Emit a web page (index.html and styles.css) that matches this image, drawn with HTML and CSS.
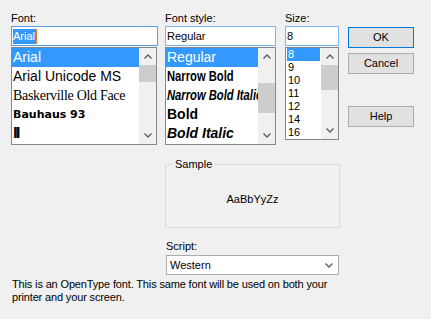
FILE: index.html
```html
<!DOCTYPE html>
<html lang="en">
<head>
  <meta charset="UTF-8" />
  <title>Font</title>
  <link rel="stylesheet" href="styles.css">
</head>
<body>
  <div class="dialog">
    <div class="top">

      <div class="col col-font">
        <div class="label">Font:</div>
        <div class="input focus"><span class="picked">Arial</span><span class="caret"></span></div>
        <div class="listbox list-font">
          <ul class="items">
            <li class="on">Arial</li>
            <li>Arial Unicode MS</li>
            <li class="f-bask">Baskerville Old Face</li>
            <li class="f-bauhaus">Bauhaus 93</li>
            <li class="f-bars">ll</li>
          </ul>
          <div class="sb">
            <div class="sb-btn"><svg width="8" height="5" viewBox="0 0 8 5"><polyline points="0.5,4.5 4,1 7.5,4.5" /></svg></div>
            <div class="sb-track"><div class="sb-thumb thumb-font"></div></div>
            <div class="sb-btn"><svg width="8" height="5" viewBox="0 0 8 5"><polyline points="0.5,0.5 4,4 7.5,0.5" /></svg></div>
          </div>
        </div>
      </div>

      <div class="col col-style">
        <div class="label">Font style:</div>
        <div class="input">Regular</div>
        <div class="listbox list-style">
          <ul class="items">
            <li class="on">Regular</li>
            <li class="s-narrow"><span>Narrow Bold</span></li>
            <li class="s-narrow s-italic"><span>Narrow Bold Italic</span></li>
            <li class="s-bold">Bold</li>
            <li class="s-bold s-italic">Bold Italic</li>
          </ul>
          <div class="sb">
            <div class="sb-btn"><svg width="8" height="5" viewBox="0 0 8 5"><polyline points="0.5,4.5 4,1 7.5,4.5" /></svg></div>
            <div class="sb-track"><div class="sb-thumb thumb-style"></div></div>
            <div class="sb-btn"><svg width="8" height="5" viewBox="0 0 8 5"><polyline points="0.5,0.5 4,4 7.5,0.5" /></svg></div>
          </div>
        </div>
      </div>

      <div class="col col-size">
        <div class="label">Size:</div>
        <div class="input">8</div>
        <div class="listbox list-size">
          <ul class="items">
            <li class="on">8</li>
            <li>9</li>
            <li>10</li>
            <li>11</li>
            <li>12</li>
            <li>14</li>
            <li>16</li>
          </ul>
          <div class="sb">
            <div class="sb-btn"><svg width="8" height="5" viewBox="0 0 8 5"><polyline points="0.5,4.5 4,1 7.5,4.5" /></svg></div>
            <div class="sb-track"><div class="sb-thumb thumb-size"></div></div>
            <div class="sb-btn"><svg width="8" height="5" viewBox="0 0 8 5"><polyline points="0.5,0.5 4,4 7.5,0.5" /></svg></div>
          </div>
        </div>
      </div>

      <div class="buttons">
        <div class="button default">OK</div>
        <div class="button">Cancel</div>
        <div class="button help">Help</div>
      </div>
    </div>

    <div class="lower">
      <fieldset class="sample">
        <legend>Sample</legend>
        <div class="sample-text">AaBbYyZz</div>
      </fieldset>
      <div class="label script-label">Script:</div>
      <div class="combo">
        <span>Western</span>
        <svg width="8" height="5" viewBox="0 0 8 5"><polyline points="0.5,0.5 4,4 7.5,0.5" /></svg>
      </div>
    </div>

    <p class="note">This is an OpenType font. This same font will be used on both your<br>printer and your screen.</p>
  </div>
</body>
</html>
```

FILE: styles.css
```css
body {
  margin: 0;
  background-color: #f0f0f0;
  color: #000;
  font-family: "Liberation Sans", Arial, sans-serif;
  font-size: 11px;
  width: 431px;
  height: 319px;
  overflow: hidden;
}

.dialog {
  padding: 10px 0 0 11px;
}

.top {
  display: flex;
  align-items: flex-start;
}

.col {
  display: flex;
  flex-direction: column;
}

.col-font {
  width: 147px;
  margin-right: 7px;
}

.col-style {
  width: 111px;
  margin-right: 9px;
}

.col-size {
  width: 54px;
  margin-right: 9px;
}

.label {
  line-height: 16px;
  height: 16px;
}

/* text boxes */
.input {
  height: 20px;
  box-sizing: border-box;
  border: 1px solid #7eb4ea;
  background: #fff;
  padding-left: 1px;
  display: flex;
  align-items: center;
  line-height: 15px;
}

.input.focus {
  border-color: #569de5;
}

.picked {
  background: #3399ff;
  color: #fff;
  padding: 0 1px 0 0;
}

.caret {
  width: 1px;
  height: 15px;
  background: #e07a1f;
}

/* list boxes */
.listbox {
  margin-top: 1px;
  box-sizing: border-box;
  border: 1px solid #828790;
  background: #fff;
  display: flex;
  overflow: hidden;
}

.list-font {
  width: 146px;
  height: 98px;
}

.list-style {
  height: 98px;
}

.list-size {
  height: 93px;
}

.items {
  list-style: none;
  margin: 0;
  padding: 0;
  flex: 1;
  min-width: 0;
  overflow: hidden;
}

.items li {
  white-space: nowrap;
  overflow: hidden;
  height: 19px;
  line-height: 19px;
  padding-left: 1px;
  font-size: 14px;
}

.items li.on {
  background: #3399ff;
  color: #fff;
}

.list-size .items {
  padding: 0 1px;
}

.list-size .items li {
  height: 13px;
  line-height: 13px;
  font-size: 11px;
  padding-left: 1px;
}

.f-bask {
  font-family: "Liberation Serif", serif;
  font-size: 14px !important;
  letter-spacing: -0.3px;
}

.f-bauhaus {
  font-family: "DejaVu Sans", sans-serif;
  font-weight: 900;
  font-size: 11px !important;
}

.f-bars {
  font-family: "DejaVu Sans", sans-serif;
  font-weight: 900;
  letter-spacing: -2px;
}

.s-narrow {
  font-weight: bold;
}

.s-narrow span {
  display: inline-block;
  transform: scaleX(0.8);
  transform-origin: left center;
}

.s-bold {
  font-weight: bold;
}

.s-italic {
  font-style: italic;
}

/* scroll bars */
.sb {
  width: 17px;
  flex: none;
  background: #f0f0f0;
  display: flex;
  flex-direction: column;
}

.sb-btn {
  height: 17px;
  flex: none;
  display: flex;
  align-items: center;
  justify-content: center;
}

.sb-btn svg polyline,
.combo svg polyline {
  fill: none;
  stroke: #606060;
  stroke-width: 1.4;
}

.sb-track {
  flex: 1;
}

.sb-thumb {
  background: #cdcdcd;
}

.thumb-font {
  height: 17px;
}

.thumb-style {
  margin-top: 18px;
  height: 30px;
}

.thumb-size {
  height: 25px;
}

/* buttons */
.buttons {
  width: 66px;
  margin-top: 17px;
  display: flex;
  flex-direction: column;
  gap: 5px;
}

.button {
  height: 21px;
  box-sizing: border-box;
  border: 1px solid #adadad;
  background: #e1e1e1;
  text-align: center;
  line-height: 19px;
}

.button.default {
  border-color: #0078d7;
}

.button.help {
  margin-top: 27px;
}

/* sample + script */
.lower {
  margin-left: 154px;
  width: 175px;
}

.sample {
  margin: 13px 0 0 0;
  padding: 0;
  border: 1px solid #dcdcdc;
  min-width: 0;
}

.sample legend {
  margin-left: 7px;
  padding: 0 2px;
  line-height: 13px;
}

.sample-text {
  height: 56px;
  box-sizing: border-box;
  padding-top: 22px;
  line-height: 13px;
  text-align: center;
}

.script-label {
  margin-top: 10px;
  padding-left: 1px;
}

.combo {
  margin: 1px 0 0 1px;
  width: 173px;
  height: 20px;
  box-sizing: border-box;
  border: 1px solid #acacac;
  background: #fff;
  display: flex;
  align-items: center;
  justify-content: space-between;
  padding: 0 5px 0 3px;
}

.note {
  margin: 3px 0 0 1px;
  line-height: 13px;
  letter-spacing: -0.15px;
}
```
